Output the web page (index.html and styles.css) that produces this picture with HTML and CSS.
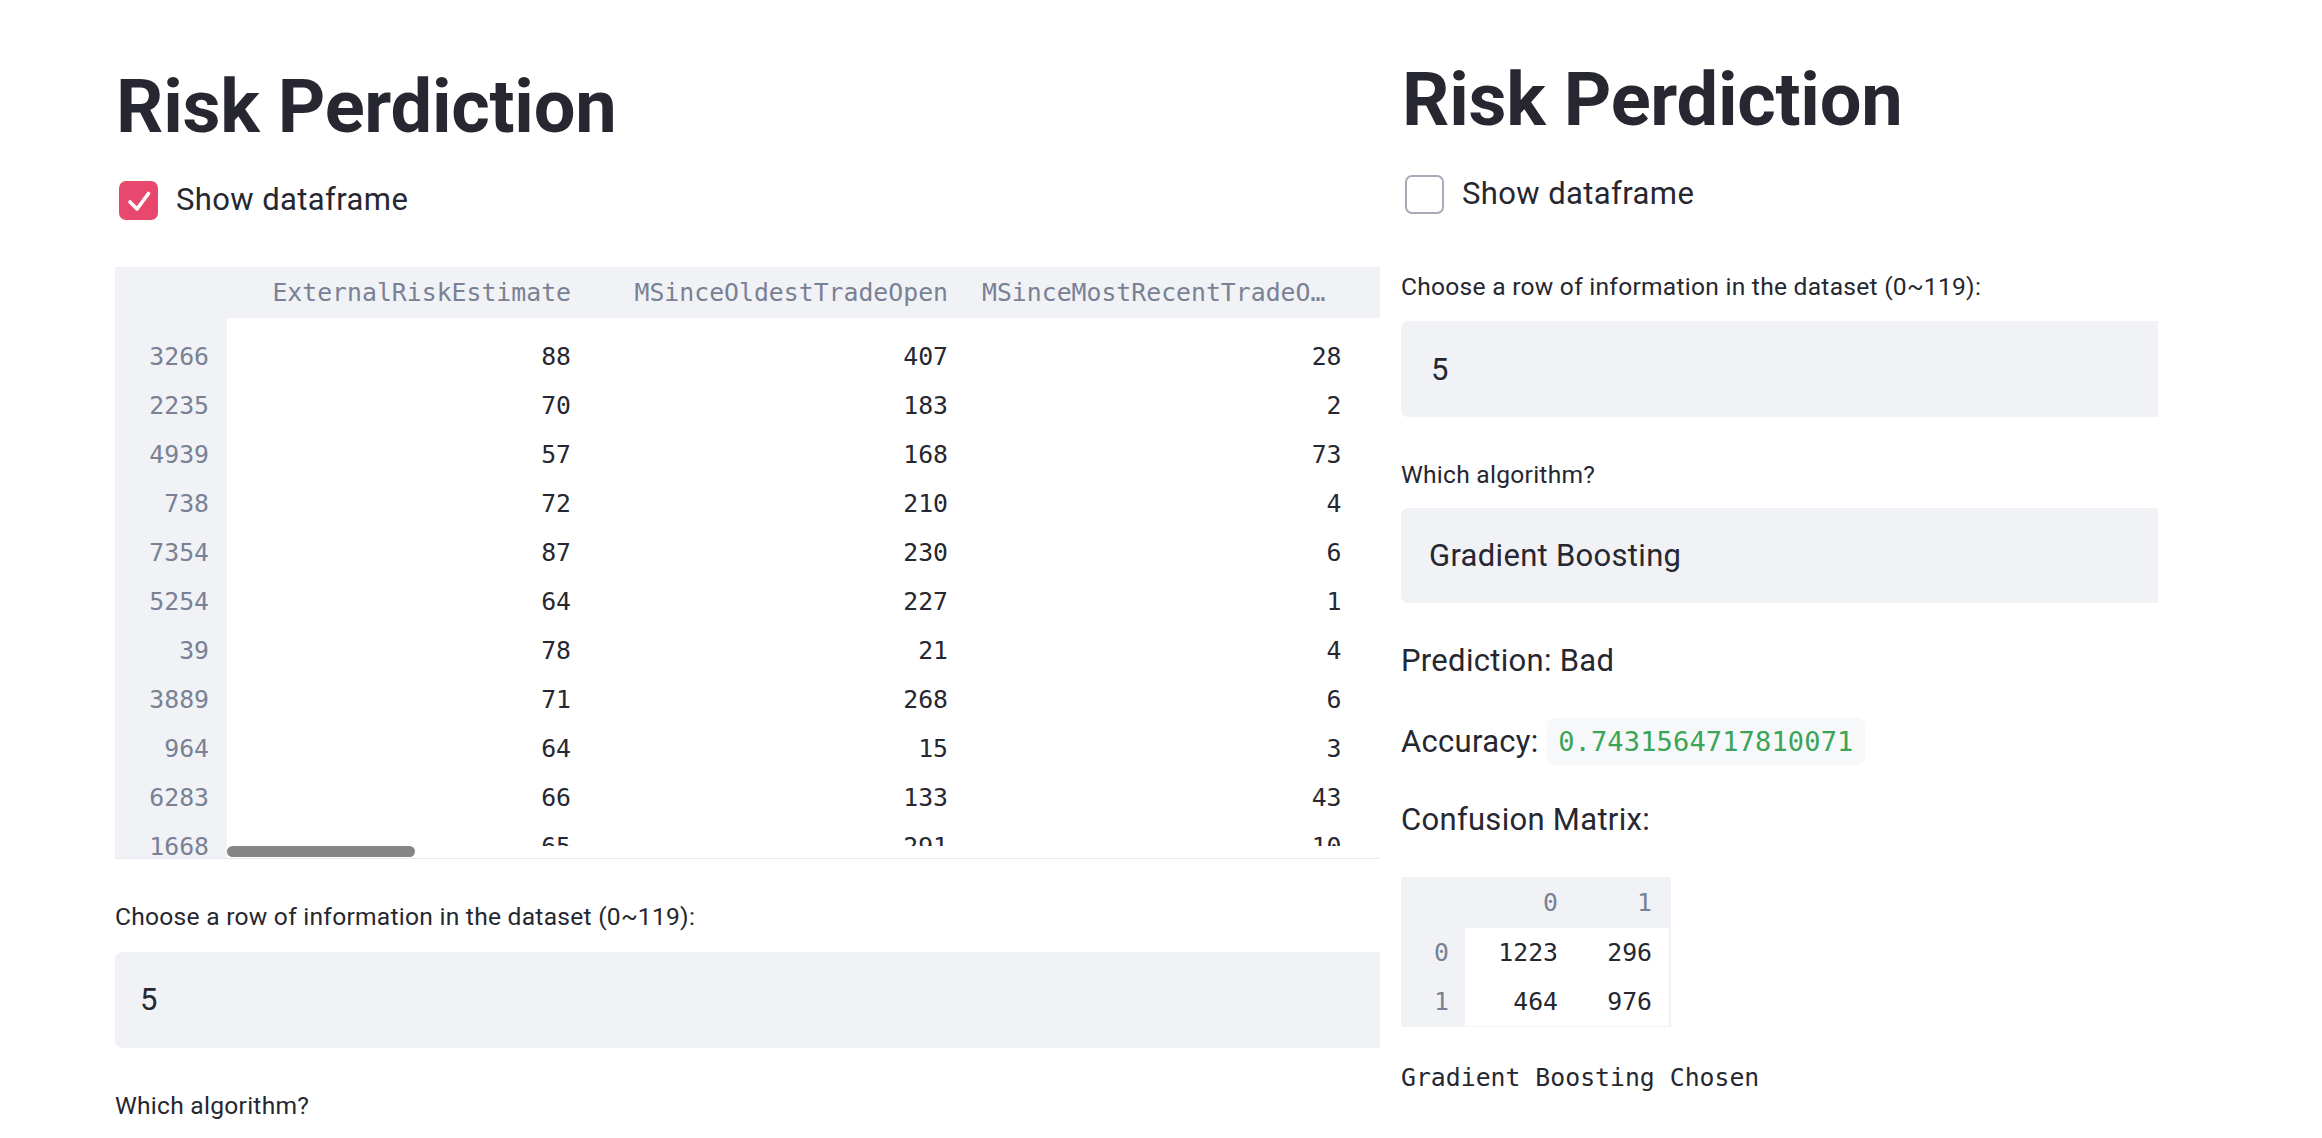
FILE: index.html
```html
<!DOCTYPE html>
<html lang="en">
<head>
<meta charset="utf-8">
<title>Risk Perdiction</title>
<link rel="stylesheet" href="styles.css">
</head>
<body>
<div class="page">
  <section class="col col-left">
    <h1 class="title">Risk Perdiction</h1>
    <div class="check">
      <span class="box box-on">
        <svg viewBox="0 0 39 39" width="39" height="39"><polyline points="11,21 18,28 29.5,12.5" fill="none" stroke="#ffffff" stroke-width="3.6" stroke-linecap="round" stroke-linejoin="round"/></svg>
      </span>
      <span class="check-label">Show dataframe</span>
    </div>

    <div class="df">
      <div class="df-head">
        <div class="h-index"></div>
        <div class="cell c1">ExternalRiskEstimate</div>
        <div class="cell c2">MSinceOldestTradeOpen</div>
        <div class="cell c3 h-trunc">MSinceMostRecentTradeO…</div>
      </div>
      <div class="df-body">
        <div class="df-index">
          <div class="idx">3266</div>
          <div class="idx">2235</div>
          <div class="idx">4939</div>
          <div class="idx">738</div>
          <div class="idx">7354</div>
          <div class="idx">5254</div>
          <div class="idx">39</div>
          <div class="idx">3889</div>
          <div class="idx">964</div>
          <div class="idx">6283</div>
          <div class="idx">1668</div>
        </div>
        <div class="df-data">
          <div class="df-rows">
            <div class="row"><div class="cell c1">88</div><div class="cell c2">407</div><div class="cell c3">28</div></div>
            <div class="row"><div class="cell c1">70</div><div class="cell c2">183</div><div class="cell c3">2</div></div>
            <div class="row"><div class="cell c1">57</div><div class="cell c2">168</div><div class="cell c3">73</div></div>
            <div class="row"><div class="cell c1">72</div><div class="cell c2">210</div><div class="cell c3">4</div></div>
            <div class="row"><div class="cell c1">87</div><div class="cell c2">230</div><div class="cell c3">6</div></div>
            <div class="row"><div class="cell c1">64</div><div class="cell c2">227</div><div class="cell c3">1</div></div>
            <div class="row"><div class="cell c1">78</div><div class="cell c2">21</div><div class="cell c3">4</div></div>
            <div class="row"><div class="cell c1">71</div><div class="cell c2">268</div><div class="cell c3">6</div></div>
            <div class="row"><div class="cell c1">64</div><div class="cell c2">15</div><div class="cell c3">3</div></div>
            <div class="row"><div class="cell c1">66</div><div class="cell c2">133</div><div class="cell c3">43</div></div>
            <div class="row"><div class="cell c1">65</div><div class="cell c2">291</div><div class="cell c3">10</div></div>
          </div>
          <div class="df-scroll"><div class="thumb"></div></div>
        </div>
      </div>
    </div>

    <div class="wlabel wlabel-after-table">Choose a row of information in the dataset (0~119):</div>
    <div class="field field-left">5</div>
    <div class="wlabel wlabel-after-field">Which algorithm?</div>
  </section>

  <section class="col col-right">
    <h1 class="title">Risk Perdiction</h1>
    <div class="check check-right">
      <span class="box box-off"></span>
      <span class="check-label">Show dataframe</span>
    </div>

    <div class="wlabel wlabel-after-check">Choose a row of information in the dataset (0~119):</div>
    <div class="field">5</div>
    <div class="wlabel wlabel-after-field">Which algorithm?</div>
    <div class="field field-select">Gradient Boosting</div>

    <p class="text text-pred">Prediction: Bad</p>
    <div class="acc"><span class="acc-label">Accuracy:</span><code class="acc-code">0.7431564717810071</code></div>
    <p class="text text-cm">Confusion Matrix:</p>

    <div class="cm">
      <div class="cm-head">
        <div class="cm-i"></div>
        <div class="cm-c cm-c0">0</div>
        <div class="cm-c cm-c1">1</div>
      </div>
      <div class="cm-row">
        <div class="cm-i">0</div>
        <div class="cm-c cm-c0 cm-val">1223</div>
        <div class="cm-c cm-c1 cm-val">296</div>
      </div>
      <div class="cm-row">
        <div class="cm-i">1</div>
        <div class="cm-c cm-c0 cm-val">464</div>
        <div class="cm-c cm-c1 cm-val">976</div>
      </div>
    </div>

    <pre class="chosen">Gradient Boosting Chosen</pre>
  </section>
</div>
</body>
</html>
```

FILE: styles.css
```css
* { box-sizing: border-box; }

html, body {
  margin: 0;
  padding: 0;
  background: #ffffff;
}

body {
  font-family: Roboto, "Noto Sans", "Liberation Sans", sans-serif;
  color: #262730;
  width: 2322px;
  height: 1138px;
  overflow: hidden;
}

.page {
  display: flex;
  gap: 21px;
  padding-left: 115px;
  height: 1138px;
  overflow: hidden;
}

.col {
  display: flex;
  flex-direction: column;
  align-items: stretch;
  overflow: hidden;
  flex: none;
}

.col-left {
  width: 1265px;
  padding-top: 63px;
}

.col-right {
  width: 757px;
  padding-top: 56px;
}

.title {
  margin: 0;
  font-size: 74px;
  font-weight: 700;
  line-height: 88px;
  height: 88px;
  color: #262730;
  white-space: nowrap;
  padding-left: 1px;
  letter-spacing: -0.25px;
}

/* checkbox */
.check {
  display: flex;
  align-items: center;
  height: 40px;
  margin-top: 29px;
}
.check-right { margin-top: 30px; }

.box {
  flex: none;
  width: 39px;
  height: 39px;
  margin-left: 4px;
  border-radius: 7px;
  display: flex;
}
.box-on { background: #e8486d; }
.box-off {
  background: #ffffff;
  border: 2.5px solid #a7abb8;
}
.check-label {
  margin-left: 18px;
  font-size: 31px;
  line-height: 40px;
  letter-spacing: 0.4px;
  white-space: nowrap;
}

/* dataframe */
.df {
  margin-top: 47px;
  width: 1265px;
  display: flex;
  flex-direction: column;
  border-bottom: 1px solid #e6e9ef;
  font-family: "DejaVu Sans Mono", "Liberation Mono", monospace;
  font-size: 24.8px;
}
.df-head {
  display: flex;
  align-items: center;
  height: 51px;
  background: #f0f2f6;
  color: #7a8194;
}
.h-index { width: 112px; flex: none; }
.cell {
  flex: none;
  text-align: right;
  padding-right: 17px;
  white-space: nowrap;
}
.c1 { width: 361px; }
.c2 { width: 377px; }
.c3 { width: 393.5px; }
.h-trunc {
  text-align: left;
  padding-left: 17px;
  padding-right: 0;
  overflow: hidden;
}

.df-body {
  display: flex;
  height: 540px;
}
.df-index {
  width: 112px;
  flex: none;
  background: #f0f2f6;
  padding-top: 13.5px;
  overflow: hidden;
  color: #7a8194;
}
.idx {
  height: 49px;
  line-height: 49px;
  text-align: right;
  padding-right: 18px;
}
.df-data {
  flex: 1;
  display: flex;
  flex-direction: column;
  background: #ffffff;
}
.df-rows {
  height: 528px;
  overflow: hidden;
  padding-top: 13.5px;
  color: #262730;
}
.row {
  display: flex;
  align-items: center;
  height: 49px;
}
.df-scroll {
  height: 12px;
  display: flex;
  align-items: flex-start;
}
.thumb {
  width: 188px;
  height: 11px;
  border-radius: 6px;
  background: #858585;
}

/* widgets */
.wlabel {
  font-size: 24.6px;
  line-height: 34px;
  letter-spacing: 0.25px;
  white-space: nowrap;
}
.wlabel-after-table { margin-top: 41px; }
.wlabel-after-field { margin-top: 41px; }
.wlabel-after-check { margin-top: 55.5px; }

.field {
  margin-top: 17.5px;
  height: 96px;
  background: #f0f2f6;
  border-radius: 7px 0 0 7px;
  display: flex;
  align-items: center;
  padding-left: 30px;
  font-size: 31px;
  letter-spacing: 0.3px;
  white-space: nowrap;
}
.field-left { padding-left: 25px; }
.field-select {
  margin-top: 16px;
  height: 95px;
  padding-left: 28px;
}

.text {
  margin: 0;
  font-size: 31px;
  line-height: 44px;
  letter-spacing: 0.3px;
  white-space: nowrap;
}
.text-pred { margin-top: 35.5px; }
.text-cm { margin-top: 33.5px; }

.acc {
  margin-top: 35px;
  height: 47px;
  display: flex;
  align-items: center;
}
.acc-label {
  font-size: 31px;
  line-height: 47px;
  letter-spacing: 0.3px;
}
.acc-code {
  margin-left: 8px;
  height: 47px;
  line-height: 47px;
  padding: 0 11.5px;
  background: #f7f8fa;
  border-radius: 8px;
  font-family: "DejaVu Sans Mono", "Liberation Mono", monospace;
  font-size: 27px;
  letter-spacing: 0.15px;
  color: #3aa556;
}

/* confusion matrix */
.cm {
  margin-top: 35px;
  width: 270px;
  height: 150px;
  background: #f0f2f6;
  display: flex;
  flex-direction: column;
  font-family: "DejaVu Sans Mono", "Liberation Mono", monospace;
  font-size: 24.8px;
  flex: none;
}
.cm-head {
  display: flex;
  align-items: center;
  height: 51px;
  color: #7a8194;
}
.cm-row {
  display: flex;
  height: 49px;
  align-items: center;
}
.cm-i {
  width: 64px;
  flex: none;
  text-align: right;
  padding-right: 16px;
  color: #7a8194;
}
.cm-c {
  flex: none;
  text-align: right;
  padding-right: 17px;
}
.cm-c0 { width: 110px; }
.cm-c1 { width: 94px; }
.cm-val {
  background: #ffffff;
  height: 49px;
  line-height: 49px;
  color: #262730;
}

.chosen {
  margin: 33.5px 0 0 0;
  font-family: "DejaVu Sans Mono", "Liberation Mono", monospace;
  font-size: 24.8px;
  line-height: 34px;
  color: #262730;
}
```
